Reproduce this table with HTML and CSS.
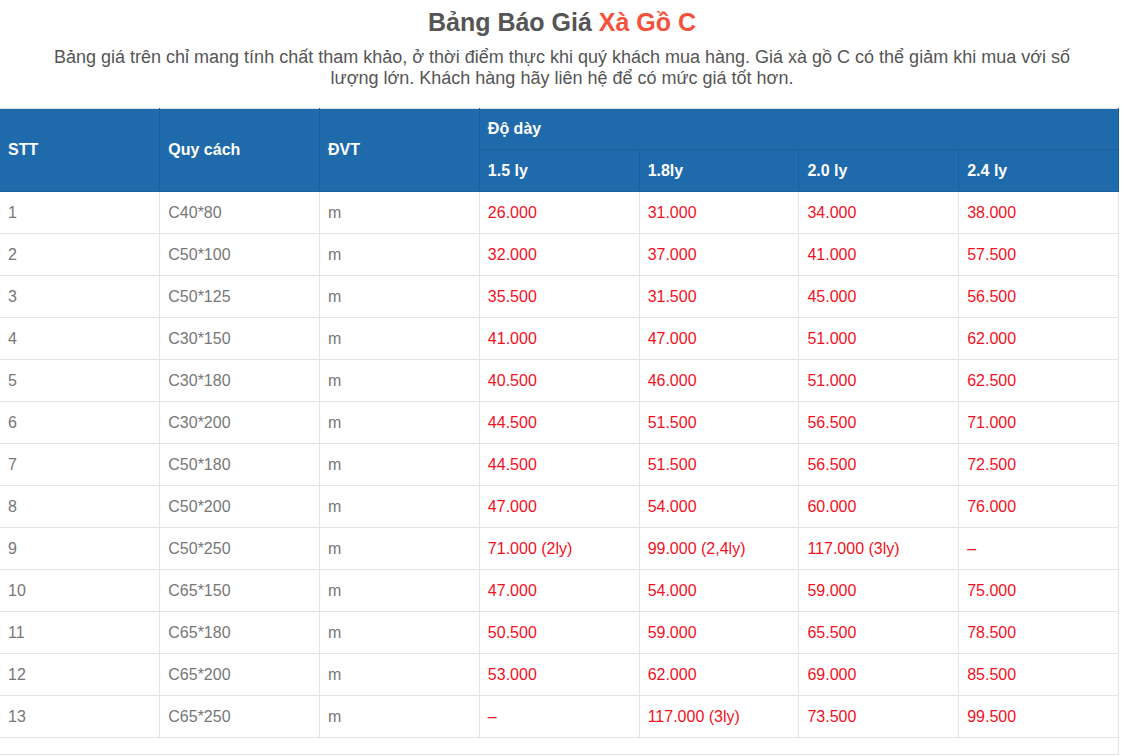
FILE: index.html
```html
<!DOCTYPE html>
<html lang="vi">
<head>
<meta charset="utf-8">
<title>Bảng Báo Giá Xà Gồ C</title>
<link rel="stylesheet" href="styles.css">
</head>
<body>
<div class="page">
  <h1 class="title">Bảng Báo Giá <span class="accent">Xà Gồ C</span></h1>
  <p class="intro">Bảng giá trên chỉ mang tính chất tham khảo, ở thời điểm thực khi quý khách mua hàng. Giá xà gồ C có thể giảm khi mua với số lượng lớn. Khách hàng hãy liên hệ để có mức giá tốt hơn.</p>
  <table class="price">
    <thead>
      <tr class="h1">
        <th rowspan="2">STT</th>
        <th rowspan="2">Quy cách</th>
        <th rowspan="2">ĐVT</th>
        <th colspan="4">Độ dày</th>
      </tr>
      <tr class="h2">
        <th>1.5 ly</th>
        <th>1.8ly</th>
        <th>2.0 ly</th>
        <th>2.4 ly</th>
      </tr>
    </thead>
    <tbody>
      <tr><td>1</td><td>C40*80</td><td>m</td><td class="p">26.000</td><td class="p">31.000</td><td class="p">34.000</td><td class="p">38.000</td></tr>
      <tr><td>2</td><td>C50*100</td><td>m</td><td class="p">32.000</td><td class="p">37.000</td><td class="p">41.000</td><td class="p">57.500</td></tr>
      <tr><td>3</td><td>C50*125</td><td>m</td><td class="p">35.500</td><td class="p">31.500</td><td class="p">45.000</td><td class="p">56.500</td></tr>
      <tr><td>4</td><td>C30*150</td><td>m</td><td class="p">41.000</td><td class="p">47.000</td><td class="p">51.000</td><td class="p">62.000</td></tr>
      <tr><td>5</td><td>C30*180</td><td>m</td><td class="p">40.500</td><td class="p">46.000</td><td class="p">51.000</td><td class="p">62.500</td></tr>
      <tr><td>6</td><td>C30*200</td><td>m</td><td class="p">44.500</td><td class="p">51.500</td><td class="p">56.500</td><td class="p">71.000</td></tr>
      <tr><td>7</td><td>C50*180</td><td>m</td><td class="p">44.500</td><td class="p">51.500</td><td class="p">56.500</td><td class="p">72.500</td></tr>
      <tr><td>8</td><td>C50*200</td><td>m</td><td class="p">47.000</td><td class="p">54.000</td><td class="p">60.000</td><td class="p">76.000</td></tr>
      <tr><td>9</td><td>C50*250</td><td>m</td><td class="p">71.000 (2ly)</td><td class="p">99.000 (2,4ly)</td><td class="p">117.000 (3ly)</td><td class="p">–</td></tr>
      <tr><td>10</td><td>C65*150</td><td>m</td><td class="p">47.000</td><td class="p">54.000</td><td class="p">59.000</td><td class="p">75.000</td></tr>
      <tr><td>11</td><td>C65*180</td><td>m</td><td class="p">50.500</td><td class="p">59.000</td><td class="p">65.500</td><td class="p">78.500</td></tr>
      <tr><td>12</td><td>C65*200</td><td>m</td><td class="p">53.000</td><td class="p">62.000</td><td class="p">69.000</td><td class="p">85.500</td></tr>
      <tr><td>13</td><td>C65*250</td><td>m</td><td class="p">–</td><td class="p">117.000 (3ly)</td><td class="p">73.500</td><td class="p">99.500</td></tr>
      <tr class="empty"><td colspan="7"></td></tr>
    </tbody>
  </table>
</div>
</body>
</html>
```

FILE: styles.css
```css
html, body {
  margin: 0;
  padding: 0;
  background: #fff;
}

body {
  font-family: "Liberation Sans", Arial, Helvetica, sans-serif;
  color: #555;
}

.page {
  width: 1124px;
}

.title {
  margin: 0;
  padding-top: 7px;
  text-align: center;
  font-size: 25px;
  line-height: 30px;
  font-weight: bold;
  color: #555;
}

.accent {
  color: #f4523b;
}

.intro {
  margin: 10px auto 0;
  width: 1030px;
  text-align: center;
  font-size: 18px;
  line-height: 21px;
  color: #555;
}

.price {
  margin-top: 19px;
  width: 1119px;
  border-collapse: collapse;
  table-layout: fixed;
  border-top: 1px solid #e4e4e4;
  border-right: 1px solid #e4e4e4;
}

.price th {
  background: #1e6aab;
  color: #fff;
  font-weight: bold;
  font-size: 16px;
  text-align: left;
  padding: 0 8px;
  border: 1px solid #1a5f9b;
}

.price thead tr:first-child th {
  border-top: 1px solid #e4e4e4;
}

.price .h1 th {
  height: 40px;
}

.price .h2 th {
  height: 41px;
}

.price td {
  height: 41px;
  padding: 0 8px;
  font-size: 16px;
  color: #777;
  border: 1px solid #e4e4e4;
}

.price td:first-child,
.price th:first-child {
  border-left: none;
}

.price td.p {
  color: #f2111e;
}

.price .empty td {
  height: 16px;
}
```
